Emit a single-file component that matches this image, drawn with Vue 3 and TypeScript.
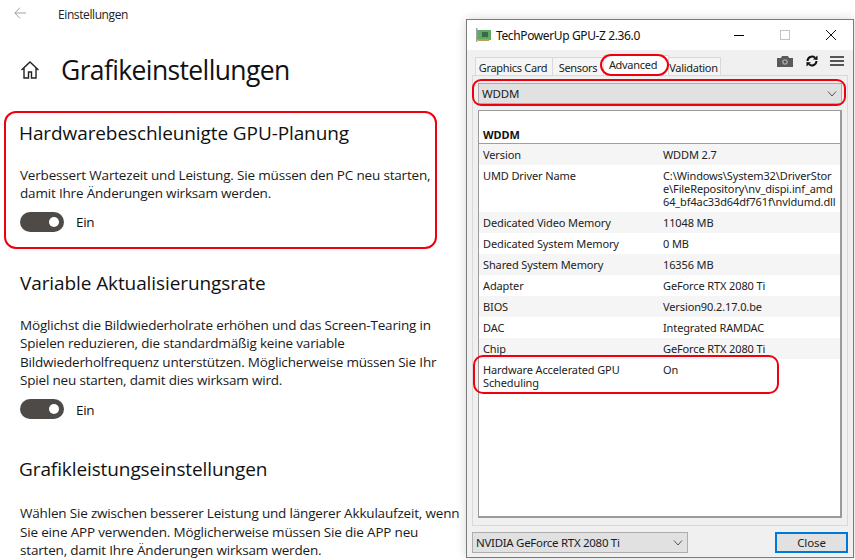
<script setup lang="ts">
interface Row { label: string; value: string }
const rows: Row[] = [
  { label: 'Version', value: 'WDDM 2.7' },
  { label: 'UMD Driver Name', value: 'C:\\Windows\\System32\\DriverStor\ne\\FileRepository\\nv_dispi.inf_amd\n64_bf4ac33d64df761f\\nvldumd.dll' },
  { label: 'Dedicated Video Memory', value: '11048 MB' },
  { label: 'Dedicated System Memory', value: '0 MB' },
  { label: 'Shared System Memory', value: '16356 MB' },
  { label: 'Adapter', value: 'GeForce RTX 2080 Ti' },
  { label: 'BIOS', value: 'Version90.2.17.0.be' },
  { label: 'DAC', value: 'Integrated RAMDAC' },
  { label: 'Chip', value: 'GeForce RTX 2080 Ti' },
  { label: 'Hardware Accelerated GPU Scheduling', value: 'On' },
]
const tabs = [
  { name: 'Graphics Card', cls: 't1' },
  { name: 'Sensors', cls: 't2' },
  { name: 'Advanced', cls: 't3 active' },
  { name: 'Validation', cls: 't4' },
]
</script>

<template>
  <div class="page">
    <main class="settings">
      <div class="topbar">
        <svg class="back" width="12" height="12" viewBox="0 0 12 12"><path d="M12 6H.8M6 .7.8 6 6 11.300" fill="none" stroke="#a0a0a0" stroke-width="1"/></svg>
        <span>Einstellungen</span>
      </div>
      <div class="title-row">
        <svg class="home" width="20" height="20" viewBox="0 0 20 20"><path d="M1.500 10 10 2l8.500 8M4 8v10h4.500v-6h3v6H16V8" fill="none" stroke="#222" stroke-width="1.400"/></svg>
        <h1>Grafikeinstellungen</h1>
      </div>
      <section class="first">
        <h2>Hardwarebeschleunigte GPU-Planung</h2>
        <p>Verbessert Wartezeit und Leistung. Sie müssen den PC neu starten,<br>damit Ihre Änderungen wirksam werden.</p>
        <div class="toggle"><i class="switch"><b></b></i><span>Ein</span></div>
      </section>
      <section class="second">
        <h2>Variable Aktualisierungsrate</h2>
        <p>Möglichst die Bildwiederholrate erhöhen und das Screen-Tearing in<br>Spielen reduzieren, die standardmäßig keine variable<br>Bildwiederholfrequenz unterstützen. Möglicherweise müssen Sie Ihr<br>Spiel neu starten, damit dies wirksam wird.</p>
        <div class="toggle"><i class="switch"><b></b></i><span>Ein</span></div>
      </section>
      <section class="third">
        <h2>Grafikleistungseinstellungen</h2>
        <p>Wählen Sie zwischen besserer Leistung und längerer Akkulaufzeit, wenn<br>Sie eine APP verwenden. Möglicherweise müssen Sie die APP neu<br>starten, damit Ihre Änderungen wirksam werden.</p>
      </section>
    </main>

    <div class="mark mark-section"></div>

    <div class="gpuz">
      <header class="titlebar">
        <svg class="appicon" width="16" height="14" viewBox="0 0 16 14">
          <rect x="1" y="2" width="14" height="10" fill="#5fa868"/>
          <rect x="0" y="0" width="1.500" height="14" fill="#a0a0a0"/>
          <rect x="6" y="4" width="6" height="5" fill="#3c6a44"/>
          <rect x="2" y="11" width="11" height="2" fill="#b9a14a"/>
        </svg>
        <span class="apptitle">TechPowerUp GPU-Z 2.36.0</span>
        <div class="winbtns">
          <svg width="12" height="12" viewBox="0 0 12 12"><path d="M1 6.500h10" stroke="#000" fill="none" shape-rendering="crispEdges"/></svg>
          <svg width="12" height="12" viewBox="0 0 12 12"><rect x="1.500" y="1.500" width="9" height="9" stroke="#c4c4c4" fill="none" shape-rendering="crispEdges"/></svg>
          <svg width="12" height="12" viewBox="0 0 12 12"><path d="m1 1 10 10M11 1 1 11" stroke="#111" fill="none"/></svg>
        </div>
      </header>
      <div class="body">
        <div class="tabbar">
          <div class="tabs">
            <span v-for="t in tabs" :key="t.name" class="tab" :class="t.cls">{{ t.name }}</span>
          </div>
          <div class="tools">
            <svg width="16" height="11" viewBox="0 0 16 11"><path d="M0 2h4l1-2h6l1 2h4v9H0z" fill="#5a5a5a"/><circle cx="8" cy="6" r="2.800" fill="#a8a8a8"/><circle cx="8" cy="6" r="1.400" fill="#555"/></svg>
            <svg width="12" height="12" viewBox="0 0 12 12"><path d="M1.500 6a4.500 4.500 0 0 1 7.500-3.200M10.500 6A4.500 4.500 0 0 1 3 9.200" fill="none" stroke="#111" stroke-width="2"/><path d="M7 4.500 11.500 5V.5zM5 7.500.5 7v4.500z" fill="#111"/></svg>
            <svg width="14" height="10" viewBox="0 0 14 10"><path d="M0 1h14M0 5h14M0 9h14" stroke="#222" stroke-width="1.600"/></svg>
          </div>
        </div>
        <div class="panel">
          <div class="combo wide"><span>WDDM</span><svg width="10" height="6" viewBox="0 0 10 6"><path d="m1 .5 4 4.500L9 .5" fill="none" stroke="#555"/></svg></div>
          <div class="list">
            <div class="heading">WDDM</div>
            <div v-for="r in rows" :key="r.label" class="row">
              <div class="label">{{ r.label }}</div>
              <div class="value">{{ r.value }}</div>
            </div>
          </div>
        </div>
        <footer class="foot">
          <div class="combo device"><span>NVIDIA GeForce RTX 2080 Ti</span><svg width="10" height="6" viewBox="0 0 10 6"><path d="m1 .5 4 4.500L9 .5" fill="none" stroke="#555"/></svg></div>
          <div class="close">Close</div>
        </footer>
      </div>
    </div>

    <div class="mark mark-tab"></div>
    <div class="mark mark-combo"></div>
    <div class="mark mark-row"></div>
  </div>
</template>

<style>
html, body { margin: 0; background: #fff; }
</style>

<style scoped>
.page { position: relative; width: 855px; height: 560px; overflow: hidden; background: #fff; font-family: "Open Sans", "Noto Sans", sans-serif; color: #111; }
.settings { padding-left: 20px; }
.topbar { height: 28px; display: flex; align-items: center; font-size: 12px; letter-spacing: -.4px; color: #222; }
.back { margin-left: -6px; margin-top: -3px; }
.topbar span { margin-left: 32px; }
.title-row { display: flex; align-items: center; height: 40px; margin-top: 22px; }
.home { margin-right: 21px; }
h1 { margin: 0; font-weight: 400; font-size: 26.500px; letter-spacing: -.63px; color: #111; line-height: 40px; }
h2 { margin: 0; font-weight: 400; font-size: 19px; letter-spacing: -.1px; line-height: 28px; color: #111; }
p { margin: 0; font-size: 13.500px; line-height: 18.400px; letter-spacing: -.18px; color: #1a1a1a; }
section.first { margin-top: 29px; }
section.first h2 { margin-left: -1px; }
section.first p { margin-top: 19px; }
section.second { margin-top: 37px; }
section.second p { margin-top: 19px; }
section.second .toggle { margin-top: 10px; }
section.third { margin-top: 36px; }
section.third h2 { margin-left: -1px; }
section.third p { margin-top: 21px; }
.toggle { display: flex; align-items: center; margin-top: 9px; height: 20px; font-size: 13.500px; letter-spacing: -.3px; }
.toggle span { padding-top: 1px; }
.switch { display: block; position: relative; width: 44px; height: 20px; border-radius: 10px; background: #4d4a48; margin-right: 12px; }
.switch b { position: absolute; right: 5px; top: 5px; width: 10px; height: 10px; border-radius: 50%; background: #fff; }
.gpuz { position: absolute; left: 466px; top: 19px; width: 386px; height: 537px; border: 1px solid #7a7a7a; background: #f0f0f0; box-shadow: 0 0 10px rgba(0,0,0,.16); display: flex; flex-direction: column; font-family: "Noto Sans", "Open Sans", sans-serif; font-size: 11px; letter-spacing: -.12px; }
.titlebar { height: 30px; background: #fff; display: flex; align-items: center; padding-left: 9px; flex: none; }
.apptitle { margin-left: 4px; font-size: 12px; letter-spacing: -.38px; color: #111; }
.winbtns { margin-left: auto; display: flex; gap: 34px; padding-right: 16px; }
.body { flex: 1; display: flex; flex-direction: column; min-height: 0; padding: 0 5px; }
.tabbar { height: 25px; display: flex; align-items: flex-end; justify-content: space-between; flex: none; }
.tabs { display: flex; align-items: flex-end; padding-left: 3px; }
.tab { height: 18px; line-height: 19px; box-sizing: border-box; text-align: center; background: #f5f5f5; border: 1px solid #d9d9d9; border-bottom: 0; margin-right: -1px; color: #222; letter-spacing: -.3px; }
.t1 { width: 78px; padding-right: 2px; }
.t2 { width: 52px; }
.t3 { width: 66px; padding-right: 6px; }
.t4 { width: 53px; padding-right: 2px; }
.tab.active { height: 20px; line-height: 17px; background: #fff; }
.tools { display: flex; align-items: center; gap: 12.500px; align-self: flex-start; margin-top: 5px; padding-right: 4px; }
.panel { flex: none; height: 451px; border: 1px solid #d9d9d9; box-sizing: border-box; padding: 7px 5px 7px; display: flex; flex-direction: column; }
.combo { display: flex; align-items: center; justify-content: space-between; background: #e1e1e1; border: 1px solid #adadad; box-sizing: border-box; padding: 0 4px 0 3px; color: #222; }
.wide { height: 21px; flex: none; font-size: 11.500px; }
.list { margin-top: 6px; flex: 1; background: #fff; border: 1px solid #9a9a9a; border-width: 1px 2px 2px 1px; display: flex; flex-direction: column; }
.heading { height: 33px; box-sizing: border-box; padding: 16px 0 0 4px; font-weight: 700; line-height: 15px; border-bottom: 1px solid #a0a0a0; flex: none; color: #111; }
.row { display: grid; grid-template-columns: 180px 1fr; padding: 4px; line-height: 13px; }
.row:nth-child(even) { background: #f5f5f5; }
.label { max-width: 148px; color: #222; }
.value { color: #222; white-space: pre; }
.foot { flex: none; height: 21px; margin-top: 6px; display: flex; justify-content: space-between; }
.device { width: 216px; height: 21px; color: #1a1a2a; font-size: 11.500px; letter-spacing: -.3px; }
.close { width: 73px; height: 21px; box-sizing: border-box; border: 2px solid #0078d7; background: #e1e1e1; text-align: center; line-height: 17px; font-size: 11.500px; color: #222; }
.mark { position: absolute; border: 2px solid #f0000f; box-sizing: border-box; }
.mark-section { left: 4px; top: 111px; width: 433px; height: 138px; border-radius: 12px; }
.mark-tab { left: 600px; top: 54px; width: 69px; height: 22px; border-radius: 11px; }
.mark-combo { left: 472px; top: 79px; width: 374px; height: 27px; border-radius: 9px; }
.mark-row { left: 473px; top: 355px; width: 306px; height: 39px; border-radius: 10px; }
</style>
